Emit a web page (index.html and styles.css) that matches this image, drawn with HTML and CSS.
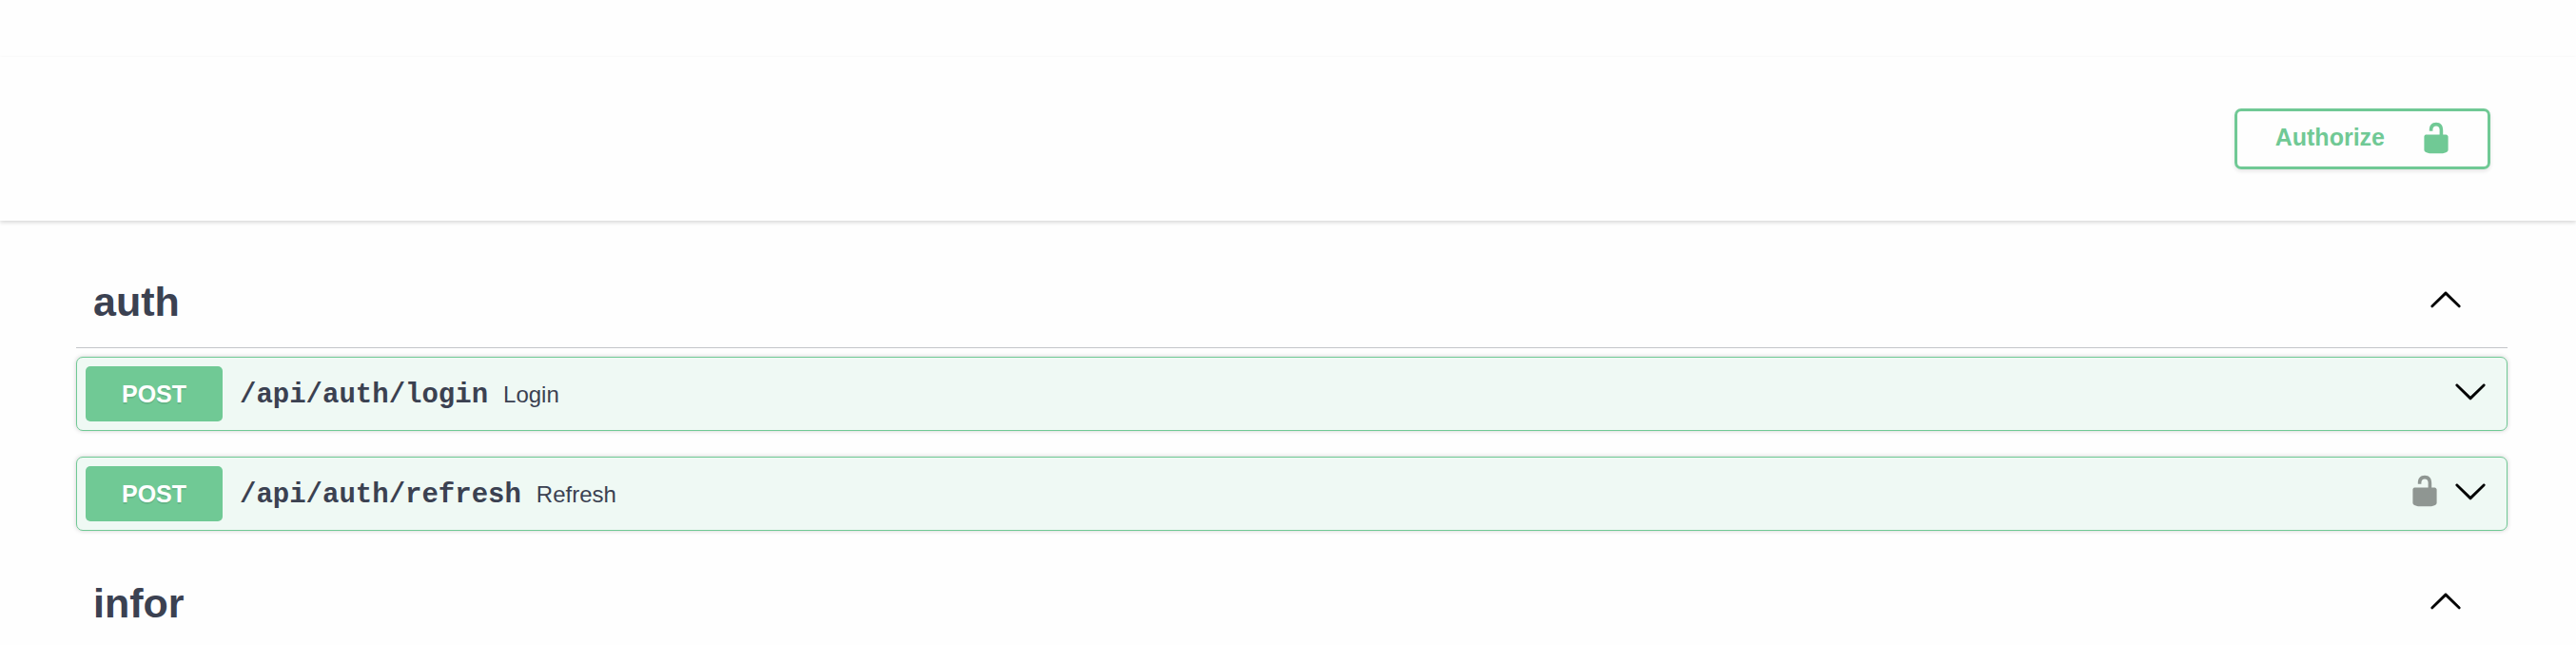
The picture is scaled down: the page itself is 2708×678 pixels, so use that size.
FILE: index.html
```html
<!DOCTYPE html>
<html lang="en">
<head>
<meta charset="utf-8">
<title>API documentation</title>
<link rel="stylesheet" href="styles.css">
</head>
<body>
<svg class="sprite" aria-hidden="true">
  <symbol id="unlocked" viewBox="0 0 20 20"><path d="M15.8 8H14V5.6C14 2.703 12.665 1 10 1 7.334 1 6 2.703 6 5.6V6h2v-.801C8 3.754 8.797 3 10 3c1.203 0 2 .754 2 2.199V8H4c-.553 0-1 .646-1 1.199V17c0 .549.428 1.139.951 1.307l1.197.387C5.672 18.861 6.55 19 7.1 19h5.8c.549 0 1.428-.139 1.951-.307l1.196-.387c.524-.167.953-.757.953-1.306V9.199C17 8.646 16.352 8 15.8 8z"/></symbol>
  <symbol id="arrow-up" viewBox="0 0 20 20"><path stroke="currentColor" stroke-width=".2" d="M17.418 14.908c.272.268.709.268.979 0s.271-.701 0-.969l-7.908-7.83c-.27-.268-.707-.268-.979 0l-7.908 7.83c-.27.268-.27.701 0 .969.271.268.709.268.979 0L10 7.767l7.418 7.141z"/></symbol>
  <symbol id="arrow-down" viewBox="0 0 20 20"><path stroke="currentColor" stroke-width=".2" d="M17.418 6.109c.272-.268.709-.268.979 0s.271.701 0 .969l-7.908 7.83c-.27.268-.707.268-.979 0l-7.908-7.83c-.27-.268-.27-.701 0-.969.271-.268.709-.268.979 0L10 13.25l7.418-7.141z"/></symbol>
</svg>
<header class="scheme">
  <button class="authorize" type="button"><span>Authorize</span><svg class="icon"><use href="#unlocked"/></svg></button>
</header>
<main class="content">
  <section class="group">
    <div class="group-head">
      <h2 class="group-title">auth</h2>
      <button class="icon-button" type="button" aria-label="Collapse auth"><svg class="icon"><use href="#arrow-up"/></svg></button>
    </div>
    <div class="operations">
      <div class="operation">
        <span class="method">POST</span>
        <code class="path">/api/auth/login</code>
        <span class="description">Login</span>
        <button class="icon-button" type="button" aria-label="Expand login"><svg class="icon"><use href="#arrow-down"/></svg></button>
      </div>
      <div class="operation">
        <span class="method">POST</span>
        <code class="path">/api/auth/refresh</code>
        <span class="description">Refresh</span>
        <button class="icon-button lock" type="button" aria-label="Authorize refresh"><svg class="icon"><use href="#unlocked"/></svg></button>
        <button class="icon-button" type="button" aria-label="Expand refresh"><svg class="icon"><use href="#arrow-down"/></svg></button>
      </div>
    </div>
  </section>
  <section class="group">
    <div class="group-head">
      <h2 class="group-title">infor</h2>
      <button class="icon-button" type="button" aria-label="Collapse infor"><svg class="icon"><use href="#arrow-up"/></svg></button>
    </div>
  </section>
</main>
</body>
</html>
```

FILE: styles.css
```css
* {
  box-sizing: border-box;
}

html {
  overflow-x: hidden;
  scrollbar-width: none;
}

body {
  margin: 0;
  background: #fefefe;
  color: #3b4151;
  font-family: "Liberation Sans", Arial, sans-serif;
}

button {
  border: 0;
  padding: 0;
  background: none;
  font: inherit;
  cursor: pointer;
}

.sprite {
  display: none;
}

.icon {
  display: block;
  width: 36px;
  height: 36px;
  fill: currentColor;
}

.scheme {
  display: flex;
  justify-content: flex-end;
  margin-top: 60px;
  padding: 54px 90px;
  background: #fefefe;
  box-shadow: 0 2px 4px rgba(0, 0, 0, 0.15);
}

.authorize {
  display: flex;
  align-items: center;
  gap: 36px;
  height: 64px;
  padding: 0 36px 3px 40px;
  border: 3px solid #70c995;
  border-radius: 7px;
  color: #70c995;
  font-size: 25px;
  font-weight: 700;
  box-shadow: 0 2px 4px rgba(0, 0, 0, 0.1);
}

.content {
  display: flex;
  flex-direction: column;
  gap: 24px;
  padding: 33px 72px 0 80px;
}

.group-head {
  display: flex;
  align-items: center;
  justify-content: space-between;
  height: 101px;
  padding: 0 47px 0 18px;
  border-bottom: 1px solid #c4c6ca;
}

.group-head .icon-button {
  padding-bottom: 2px;
}

.group-title {
  margin: 0;
  padding-top: 3px;
  font-size: 43px;
  line-height: 52px;
}

.icon-button {
  flex: none;
  color: #000;
}

.operations {
  display: flex;
  flex-direction: column;
  gap: 27px;
  margin-top: 9px;
}

.operation {
  display: flex;
  align-items: center;
  height: 78px;
  padding: 0 20px 0 9px;
  border: 1px solid #70c995;
  border-radius: 7px;
  background: #eff9f4;
  box-shadow: 0 0 5px rgba(0, 0, 0, 0.19);
}

.operation .icon-button {
  margin-left: auto;
  padding-bottom: 7px;
}

.operation .lock {
  color: #8f9692;
}

.operation .lock + .icon-button {
  margin-left: 12px;
}

.method {
  min-width: 144px;
  border-radius: 5px;
  background: #70c995;
  color: #fff;
  font-size: 25px;
  font-weight: 700;
  line-height: 58px;
  text-align: center;
  text-shadow: 0 2px 0 rgba(0, 0, 0, 0.1);
}

.path {
  padding: 2px 16px 0 18px;
  font-family: "Liberation Mono", "Courier New", monospace;
  font-size: 29px;
  font-weight: 700;
}

.description {
  padding-top: 1px;
  font-size: 24px;
}
```
